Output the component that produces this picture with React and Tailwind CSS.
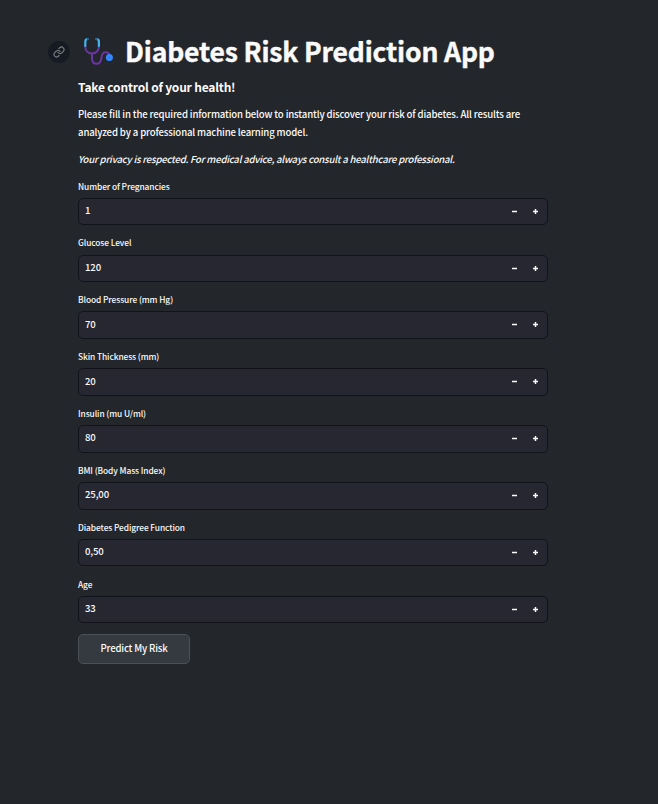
import React from "react";

const fields = [
  { label: "Number of Pregnancies", value: "1", row: "h-[57px]", box: "h-[27px]", lead: "leading-[10px]", pad: "pb-[4px]" },
  { label: "Glucose Level", value: "120", row: "h-[56px]", box: "h-[27px]", lead: "leading-[8px]", pad: "pb-[4px]" },
  { label: "Blood Pressure (mm Hg)", value: "70", row: "h-[57px]", box: "h-[28px]", lead: "leading-[10px]", pad: "pb-[2px]" },
  { label: "Skin Thickness (mm)", value: "20", row: "h-[57px]", box: "h-[28px]", lead: "leading-[10px]", pad: "pb-[2px]" },
  { label: "Insulin (mu U/ml)", value: "80", row: "h-[57px]", box: "h-[28px]", lead: "leading-[10px]", pad: "pb-[4px]" },
  { label: "BMI (Body Mass Index)", value: "25,00", row: "h-[57px]", box: "h-[28px]", lead: "leading-[10px]", pad: "pb-[4px]" },
  { label: "Diabetes Pedigree Function", value: "0,50", row: "h-[57px]", box: "h-[27px]", lead: "leading-[10px]", pad: "pb-[4px]" },
  { label: "Age", value: "33", row: "h-[55px]", box: "h-[27px]", lead: "leading-[10px]", pad: "pb-[4px]" },
];

function LinkIcon() {
  return (
    <svg width="12" height="12" viewBox="0 0 24 24" fill="none" stroke="#7b7e86" strokeWidth="2.2" strokeLinecap="round" strokeLinejoin="round">
      <path d="M10 13a5 5 0 0 0 7.54.54l3-3a5 5 0 0 0-7.07-7.07l-1.72 1.71" />
      <path d="M14 11a5 5 0 0 0-7.54-.54l-3 3a5 5 0 0 0 7.07 7.07l1.71-1.71" />
    </svg>
  );
}

function Stethoscope() {
  return (
    <svg width="30" height="30" viewBox="0 0 30 30" fill="none" strokeLinecap="round">
      <path d="M2.3 9.5C2.3 13.5 5 16.4 9 16.4S15.9 13.5 15.9 9.5" stroke="#6936a3" strokeWidth="2" />
      <path d="M9 16.4V21.5C9 25 11 26.8 14 26.8C21 26.8 16 15.6 22 15.3C25 15.1 26.6 16.5 26.6 18.5" stroke="#6936a3" strokeWidth="2" />
      <path d="M4.6 2C2.8 2 2.3 2.9 2.3 4.7V9M13.6 2C15.4 2 15.9 2.9 15.9 4.7V9" stroke="#42b4ee" strokeWidth="2.2" />
      <path d="M4.6 2H5.2M13 2H13.6" stroke="#285e91" strokeWidth="2" />
      <circle cx="26.4" cy="20.6" r="3.5" fill="#3388ff" />
      <circle cx="26.4" cy="20.6" r="1" fill="#2b7af0" />
    </svg>
  );
}

function Field({ label, value, row, box, lead, pad }) {
  return (
    <div className={row}>
      <label className={`${lead} flex h-[17px] items-start whitespace-nowrap text-[8.4px] tracking-[-0.09px]`}>{label}</label>
      <div className={`${box} flex items-start rounded-[5px] border border-[#11131a] bg-[#262730]`}>
        <span className={`${pad} flex flex-1 items-center self-stretch pl-[6px] text-[9.6px] leading-[14px] tracking-[-0.15px]`}>{value}</span>
        <svg className="mr-[7px] mt-[9px]" width="29" height="7" viewBox="0 0 29 7" fill="none" stroke="#fafafa" strokeWidth="1.5">
          <path d="M1 3.5H6M22 3.5H27M24.5 1V6" />
        </svg>
      </div>
    </div>
  );
}

export default function App() {
  return (
    <main className="h-[804px] w-[658px] overflow-hidden bg-[#23272b] pl-[48px] pt-[36px] font-['Noto_Sans_CJK_SC',sans-serif] font-medium text-[#fafafa]">
      <header className="flex h-[32px] items-center">
        <span className="mb-px flex size-[22px] shrink-0 items-center justify-center rounded-full bg-[#161a22]">
          <LinkIcon />
        </span>
        <span className="ml-[13px] flex w-[42px] shrink-0"><Stethoscope /></span>
        <h1 className="whitespace-nowrap pb-[2px] text-[26.5px] font-bold leading-[32px] tracking-[-0.16px] [-webkit-text-stroke:0.4px_#fafafa]">Diabetes Risk Prediction App</h1>
      </header>
      <div className="ml-[30px] w-[470px]">
        <h4 className="mt-[11px] whitespace-nowrap text-[12px] font-bold leading-[16px] tracking-[-0.19px]">Take control of your health!</h4>
        <p className="mt-[10px] whitespace-nowrap text-[9.6px] leading-[18px] tracking-[-0.14px]">
          Please fill in the required information below to instantly discover your risk of diabetes. All results are
          <br />
          analyzed by a professional machine learning model.
        </p>
        <p className="mt-[9px] whitespace-nowrap text-[9.6px] italic leading-[18px] tracking-[-0.23px]">
          Your privacy is respected. For medical advice, always consult a healthcare professional.
        </p>
        <form className="mt-[13px]">
          {fields.map((f) => <Field key={f.label} {...f} />)}
          <button type="button" className="flex h-[30px] w-[112px] items-center justify-center rounded-[5px] border border-[#4b5056] bg-[#343a40] pb-px text-[9.6px] tracking-[-0.17px]">
            Predict My Risk
          </button>
        </form>
      </div>
    </main>
  );
}
